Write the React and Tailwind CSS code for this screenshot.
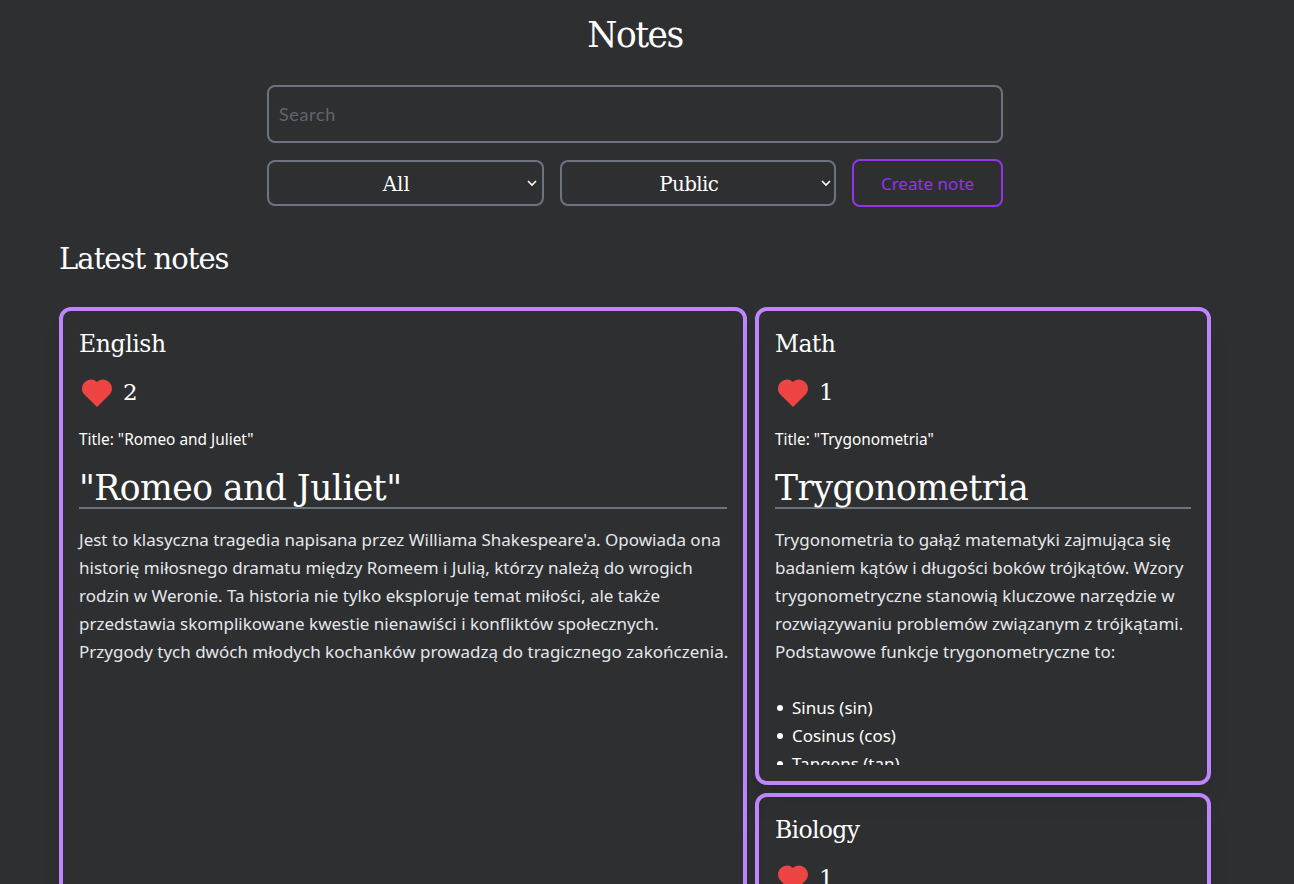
const slab = "font-['DejaVu_Serif',serif]";
const sans = "font-['Noto_Sans',sans-serif]";

function Heart() {
  return (
    <svg className="size-9 text-[#ef4444]" viewBox="0 0 24 24" fill="currentColor">
      <path d="M20.205 4.791a5.938 5.938 0 0 0-4.209-1.754A5.906 5.906 0 0 0 12 4.595a5.904 5.904 0 0 0-3.996-1.558 5.942 5.942 0 0 0-4.213 1.758c-2.353 2.363-2.352 6.059.002 8.412L12 21.414l8.207-8.207c2.354-2.353 2.355-6.049-.002-8.416z" />
    </svg>
  );
}

function Filter({ value, iconClass, textClass }) {
  return (
    <div className={`flex h-[46px] w-[276.5px] items-center rounded-lg border-2 border-[#6b7280] text-[19.8px] text-white ${slab}`}>
      <span className={`flex-1 pt-[3px] text-center ${textClass}`}>{value}</span>
      <svg className={`size-2.5 ${iconClass}`} viewBox="0 0 10 10" fill="none" stroke="currentColor" strokeWidth="1.6">
        <path d="M1 3l4 4 4-4" />
      </svg>
    </div>
  );
}

function Card({ subject, subjectClass, likes, title, heading, headingClass, lines, items, className }) {
  return (
    <article className={`rounded-xl border-4 border-[#c084fc] px-3 py-4 shadow-xl ${className}`}>
      <div className="flex h-full flex-col gap-4 overflow-hidden px-1">
        <h3 className={`h-8 shrink-0 text-[23.5px] leading-[34px] ${slab} ${subjectClass}`}>{subject}</h3>
        <div className="flex h-9 shrink-0 items-center gap-2">
          <Heart />
          <span className={`pb-0.5 text-[23px] leading-8 tracking-[-0.5px] ${slab}`}>{likes}</span>
        </div>
        <p className={`h-6 shrink-0 whitespace-nowrap pt-px text-[15.4px] leading-6 ${sans}`}>{title}</p>
        <h1 className={`h-[42px] shrink-0 whitespace-nowrap border-b-2 border-[#6b7280] text-[34.5px] leading-[42px] ${slab} ${headingClass}`}>{heading}</h1>
        <div className={`whitespace-nowrap pt-px text-[17px] leading-7 ${sans}`}>
          <p className="text-[#e5e7eb]">
            {lines.map((line) => (
              <span key={line} className="block">{line}</span>
            ))}
          </p>
          {items.length > 0 && (
            <ul className="mt-7">
              {items.map((item) => (
                <li key={item} className="flex items-center gap-[9px] pl-[1.5px]">
                  <span className="size-[6.5px] rounded-full bg-white" />
                  {item}
                </li>
              ))}
            </ul>
          )}
        </div>
      </div>
    </article>
  );
}

export default function App() {
  return (
    <div className="h-screen w-full overflow-hidden bg-[#2e2f31] pr-6 text-white">
      <main className="mx-auto flex w-[1152px] flex-col">
        <h1 className={`mt-[15px] text-center text-[34.5px] leading-10 tracking-[-1.5px] ${slab}`}>Notes</h1>
        <section className="mx-auto mt-[30px] flex w-[736px] flex-col gap-4">
          <input
            placeholder="Search"
            className="h-[58px] rounded-lg border-2 border-[#6b7280] bg-transparent px-2.5 font-['Lato',sans-serif] text-[18px] tracking-[0.65px] outline-none placeholder:text-[#60656e]"
          />
          <div className="flex h-12 items-center gap-4">
            <Filter value="All" iconClass="mr-[5px]" textClass="pr-[3px]" />
            <Filter value="Public" iconClass="mr-[3px]" textClass="pr-[5px] tracking-[-0.6px]" />
            <button className={`h-12 w-[151px] rounded-lg border-2 border-[#9333ea] pt-0.5 text-[17px] text-[#9333ea] ${sans}`}>Create note</button>
          </div>
        </section>
        <h2 className={`mt-[34px] h-9 text-[29px] leading-9 tracking-[-0.95px] ${slab}`}>Latest notes</h2>
        <section className="mt-[30px] grid grid-cols-5 grid-rows-[478px_478px] gap-2">
          <Card
            className="col-span-3 row-span-2"
            subject="English"
            subjectClass="tracking-[-0.4px]"
            likes="2"
            title={'Title: "Romeo and Juliet"'}
            heading={'"Romeo and Juliet"'}
            headingClass="tracking-[-0.5px]"
            lines={[
              "Jest to klasyczna tragedia napisana przez Williama Shakespeare'a. Opowiada ona",
              "historię miłosnego dramatu między Romeem i Julią, którzy należą do wrogich",
              "rodzin w Weronie. Ta historia nie tylko eksploruje temat miłości, ale także",
              "przedstawia skomplikowane kwestie nienawiści i konfliktów społecznych.",
              "Przygody tych dwóch młodych kochanków prowadzą do tragicznego zakończenia.",
            ]}
            items={[]}
          />
          <Card
            className="col-span-2"
            subject="Math"
            subjectClass="tracking-[-0.6px]"
            likes="1"
            title={'Title: "Trygonometria"'}
            heading="Trygonometria"
            headingClass="tracking-[-0.5px]"
            lines={[
              "Trygonometria to gałąź matematyki zajmująca się",
              "badaniem kątów i długości boków trójkątów. Wzory",
              "trygonometryczne stanowią kluczowe narzędzie w",
              "rozwiązywaniu problemów związanym z trójkątami.",
              "Podstawowe funkcje trygonometryczne to:",
            ]}
            items={["Sinus (sin)", "Cosinus (cos)", "Tangens (tan)"]}
          />
          <Card
            className="col-span-2"
            subject="Biology"
            subjectClass="tracking-[-0.65px]"
            likes="1"
            title=""
            heading=""
            headingClass=""
            lines={[]}
            items={[]}
          />
        </section>
      </main>
    </div>
  );
}
